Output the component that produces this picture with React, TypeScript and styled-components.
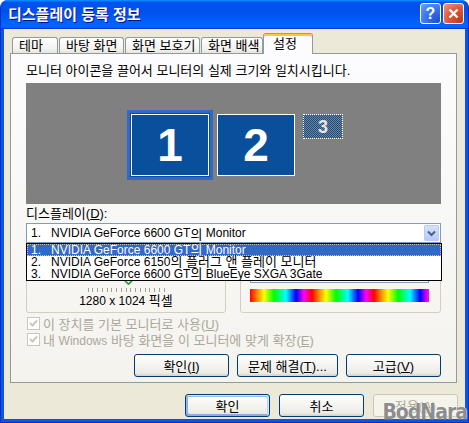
import styled, { createGlobalStyle, css } from "styled-components";

const GlobalStyle = createGlobalStyle`
  html, body {
    margin: 0;
    padding: 0;
    background: #ffffff;
  }
  body {
    font-family: "Liberation Sans", "Noto Sans CJK KR", sans-serif;
    font-size: 13px;
    color: #000;
  }
  * {
    box-sizing: border-box;
  }
`;

const Window = styled.div`
  position: relative;
  width: 469px;
  height: 423px;
  display: flex;
  flex-direction: column;
  background: #0b55e3;
  border: 1px solid #0031c4;
  border-top: 0;
  border-radius: 8px 8px 0 0;
  overflow: hidden;
`;

const TitleBar = styled.div`
  height: 29px;
  margin: 0 -1px;
  display: flex;
  align-items: center;
  padding: 0 5px 2px 8px;
  background: linear-gradient(
    180deg,
    #0997ff,
    #0053ee 8%,
    #0050ee 40%,
    #0066ff 88%,
    #0066ff 93%,
    #005bff 95%,
    #003dd7 96%,
    #003dd7
  );
`;

const Title = styled.div`
  flex: 1;
  color: #fff;
  font-size: 15px;
  font-weight: bold;
  text-shadow: 1px 1px #0f1089;
`;

const TitleButton = styled.div<{ $kind: "help" | "close" }>`
  width: 21px;
  height: 21px;
  margin-left: 2px;
  border: 1px solid #fff;
  border-radius: 3px;
  display: grid;
  place-items: center;
  color: #fff;
  font-family: "Liberation Sans", sans-serif;
  font-weight: bold;
  font-size: 16px;
  ${(p) =>
    p.$kind === "help"
      ? css`
          background: radial-gradient(circle at 90% 90%, #1f4fd0 0%, #3b77ee 55%, #6f9ff7 100%);
        `
      : css`
          background: radial-gradient(circle at 90% 90%, #c4391b 0%, #e0583b 55%, #ef9a83 100%);
        `}
`;

const Body = styled.div`
  flex: 1;
  margin: 0 3px 3px;
  background: #ece9d8;
  display: flex;
  flex-direction: column;
  padding: 4px 7px 2px 6px;
`;

const TabRow = styled.div`
  position: relative;
  z-index: 1;
  height: 20px;
  display: flex;
  align-items: flex-end;
  padding-left: 2px;
`;

const Tab = styled.div<{ $w: number; $active?: boolean }>`
  width: ${(p) => p.$w}px;
  height: 16px;
  margin-right: 1px;
  padding-left: 6px;
  line-height: 15px;
  white-space: nowrap;
  border: 1px solid #919b9c;
  border-bottom: 0;
  border-radius: 3px 3px 0 0;
  background: linear-gradient(180deg, #ffffff, #f3f3ef 70%, #e6e5dd);
  ${(p) =>
    p.$active &&
    css`
      height: 21px;
      margin: 0 0 -1px -1px;
      padding-left: 9px;
      line-height: 15px;
      border-top: 1px solid #e68b2c;
      box-shadow: inset 0 2px #ffc73c;
      padding-top: 2px;
      background: #fcfcfe;
    `}
`;

const Panel = styled.div`
  width: 447px;
  height: 330px;
  border: 1px solid #919b9c;
  background: linear-gradient(180deg, #fcfcfe, #f4f3ee);
  display: flex;
  flex-direction: column;
  padding: 10px 15px 5px 15px;
`;

const Line = styled.div`
  height: 14px;
  line-height: 14px;
  white-space: pre;
`;

const Ko = styled.span`
  font-size: 13px;
`;

const Lat = styled.span`
  font-size: 12px;
`;

const Preview = styled.div`
  height: 121px;
  margin-top: 5px;
  background: #808080;
  display: flex;
  align-items: flex-start;
  gap: 8px;
  padding: 31px 0 0 105px;
`;

const Monitor = styled.div<{ $selected?: boolean }>`
  width: 78px;
  height: 62px;
  border: 1px solid #fff;
  background: #0a4f9b;
  display: grid;
  place-items: center;
  color: #fff;
  font-family: "Liberation Sans", sans-serif;
  font-weight: bold;
  font-size: 46px;
  line-height: 1;
  ${(p) =>
    p.$selected &&
    css`
      box-shadow: 0 0 0 1px #0a4f9b, 0 0 0 4px #3169c6;
    `}
`;

const GhostMonitor = styled.div`
  width: 40px;
  height: 25px;
  border: 1px dotted #fff;
  background: repeating-conic-gradient(#0a4f9b 0 25%, #808080 0 50%) 0 0 / 2px 2px;
  display: grid;
  place-items: center;
  color: #e6e6e6;
  font-family: "Liberation Sans", sans-serif;
  font-weight: bold;
  font-size: 18px;
  line-height: 1;
`;

const Label = styled(Line)`
  margin-top: 3px;
`;

const SelectWrap = styled.div`
  position: relative;
  z-index: 2;
  margin-top: 2px;
`;

const Select = styled.div<{ $w: number }>`
  width: ${(p) => p.$w}px;
  height: 20px;
  border: 1px solid #7f9db9;
  background: #fff;
  display: flex;
  align-items: center;
  padding-left: 4px;
  font-size: 12px;
  white-space: pre;
`;

const ArrowButton = styled.div`
  margin-left: auto;
  margin-right: 1px;
  width: 15px;
  height: 16px;
  border: 1px solid #b9ccf9;
  border-radius: 1px;
  background: linear-gradient(180deg, #d5e1fc, #b6cbf8);
  display: grid;
  place-items: center;
`;

const DropList = styled.div`
  position: absolute;
  top: 100%;
  left: 0;
  width: 416px;
  height: 38px;
  border: 1px solid #000;
  background: #fff;
`;

const DropItem = styled.div<{ $active?: boolean }>`
  height: 12px;
  line-height: 12px;
  padding-left: 4px;
  font-size: 12px;
  white-space: pre;
  ${(p) =>
    p.$active &&
    css`
      background: #316ac5;
      color: #fff;
      outline: 1px dotted #f2c45e;
      outline-offset: -1px;
    `}
`;

const GroupRow = styled.div`
  margin-top: 4px;
  display: flex;
  gap: 14px;
`;

const Group = styled.div<{ $w: number }>`
  width: ${(p) => p.$w}px;
  height: 66px;
  border: 1px solid #d0d0bf;
  border-radius: 3px;
  display: flex;
  flex-direction: column;
`;

const ResolutionBox = styled(Group)`
  align-items: center;
  padding-top: 14px;
`;

const Track = styled.div`
  position: relative;
  width: 77px;
  height: 24px;
  &::before {
    content: "";
    position: absolute;
    left: 0;
    right: 0;
    top: 10px;
    height: 4px;
    border: 1px solid #9d9c99;
    border-right-color: #fff;
    border-bottom-color: #fff;
    background: #e6e5dd;
  }
`;

const Thumb = styled.svg`
  position: absolute;
  left: 35px;
  top: 3px;
`;

const Ticks = styled.div`
  width: 77px;
  height: 4px;
  margin-top: 2px;
  display: flex;
  justify-content: space-between;
  span {
    width: 1px;
    background: #a1a192;
  }
`;

const ResText = styled(Line)`
  margin-top: 2px;
`;

const ColorBox = styled(Group)`
  padding: 15px 11px 0 9px;
`;

const ColorBar = styled.div`
  width: 179px;
  height: 13px;
  margin-top: 6px;
  background: repeating-linear-gradient(
    90deg,
    #ff0000 0px,
    #ff9900 8px,
    #ffff00 14px,
    #00ff00 24px,
    #00ffff 36px,
    #0000ff 46px,
    #ff00ff 54px,
    #ff0000 62px
  );
`;

const CheckRow = styled.div<{ $gap: number }>`
  margin-top: ${(p) => p.$gap}px;
  height: 14px;
  display: flex;
  align-items: center;
  gap: 3px;
  padding-left: 1px;
  color: #aca899;
  white-space: pre;
`;

const CheckBox = styled.div`
  width: 13px;
  height: 13px;
  border: 1px solid #cac8bb;
  background: #fff;
  display: grid;
  place-items: center;
`;

const ButtonRow = styled.div<{ $top: number; $gap: number }>`
  margin-top: ${(p) => p.$top}px;
  display: flex;
  justify-content: flex-end;
  gap: ${(p) => p.$gap}px;
`;

const Button = styled.button<{ $w: number; $default?: boolean }>`
  width: ${(p) => p.$w}px;
  height: 23px;
  padding: 0;
  font: inherit;
  color: #000;
  border: 1px solid #003c74;
  border-radius: 3px;
  background: linear-gradient(180deg, #ffffff, #ecebe6 86%, #d6d0c5);
  white-space: pre;
  ${(p) =>
    p.$default &&
    css`
      box-shadow: inset -1px 1px #cee7ff, inset 1px 2px #98b8ea, inset -2px 2px #bcd4f6,
        inset 1px -1px #89ade4, inset 2px -2px #89ade4;
    `}
  &:disabled {
    color: #aca899;
    border-color: #c9c7ba;
    background: #f5f4ea;
  }
`;

const Watermark = styled.div`
  position: absolute;
  right: 1px;
  bottom: 0;
  line-height: 19px;
  font-family: "DejaVu Sans", sans-serif;
  font-stretch: condensed;
  font-weight: bold;
  font-size: 21px;
  letter-spacing: -1px;
  color: rgba(120, 120, 120, 0.85);
  text-shadow: 0 0 1px #fff, 0 0 1px #fff;
  pointer-events: none;
`;

const Chevron = () => (
  <svg width="9" height="7" viewBox="0 0 9 7">
    <path d="M1 1.5 L4.5 5 L8 1.5" fill="none" stroke="#4d6185" strokeWidth="2" />
  </svg>
);

const Check = () => (
  <svg width="9" height="9" viewBox="0 0 9 9">
    <path d="M1 4 L3.5 6.5 L8 1.5" fill="none" stroke="#cac8bb" strokeWidth="2" />
  </svg>
);

const tabs = [
  { label: "테마", w: 46 },
  { label: "바탕 화면", w: 65 },
  { label: "화면 보호기", w: 75 },
  { label: "화면 배색", w: 62 },
];

export default function App() {
  return (
    <>
      <GlobalStyle />
      <Window>
        <TitleBar>
          <Title>디스플레이 등록 정보</Title>
          <TitleButton $kind="help">?</TitleButton>
          <TitleButton $kind="close">
            <svg width="11" height="11" viewBox="0 0 11 11">
              <path d="M1.5 1.5 L9.5 9.5 M9.5 1.5 L1.5 9.5" stroke="#fff" strokeWidth="2.4" />
            </svg>
          </TitleButton>
        </TitleBar>
        <Body>
          <TabRow>
            {tabs.map((t) => (
              <Tab key={t.label} $w={t.w}>
                {t.label}
              </Tab>
            ))}
            <Tab $w={50} $active>
              설정
            </Tab>
          </TabRow>
          <Panel>
            <Line>모니터 아이콘을 끌어서 모니터의 실제 크기와 일치시킵니다.</Line>
            <Preview>
              <Monitor $selected>1</Monitor>
              <Monitor>2</Monitor>
              <GhostMonitor>3</GhostMonitor>
            </Preview>
            <Label>
              디스플레이(<u>D</u>):
            </Label>
            <SelectWrap>
              <Select $w={415}>
                {"1.   NVIDIA GeForce 6600 GT"}
                <Ko>의</Ko> Monitor
                <ArrowButton>
                  <Chevron />
                </ArrowButton>
              </Select>
              <DropList>
                <DropItem $active>
                  {"1.   NVIDIA GeForce 6600 GT"}
                  <Ko>의</Ko> Monitor
                </DropItem>
                <DropItem>
                  {"2.   NVIDIA GeForce 6150"}
                  <Ko>의 플러그 앤 플레이 모니터</Ko>
                </DropItem>
                <DropItem>
                  {"3.   NVIDIA GeForce 6600 GT"}
                  <Ko>의</Ko> BlueEye SXGA 3Gate
                </DropItem>
              </DropList>
            </SelectWrap>
            <GroupRow>
              <ResolutionBox $w={200}>
                <Track>
                  <Thumb width="11" height="21" viewBox="0 0 11 21">
                    <path d="M0.5 0.5 H10.5 V15 L5.5 20 L0.5 15 Z" fill="#f7f7f4" stroke="#9d9c99" />
                    <path d="M1.5 15 L5.5 19 L9.5 15" fill="none" stroke="#21a121" strokeWidth="1.5" />
                  </Thumb>
                </Track>
                <Ticks>
                  {Array.from({ length: 17 }).map((_, i) => (
                    <span key={i} />
                  ))}
                </Ticks>
                <ResText>
                  <Lat>1280 x 1024</Lat> 픽셀
                </ResText>
              </ResolutionBox>
              <ColorBox $w={201}>
                <Select $w={179}>
                  <ArrowButton>
                    <Chevron />
                  </ArrowButton>
                </Select>
                <ColorBar />
              </ColorBox>
            </GroupRow>
            <CheckRow $gap={3}>
              <CheckBox>
                <Check />
              </CheckBox>
              <span>
                이 장치를 기본 모니터로 사용(<u>U</u>)
              </span>
            </CheckRow>
            <CheckRow $gap={2}>
              <CheckBox>
                <Check />
              </CheckBox>
              <span>
                내 <Lat>Windows</Lat> 바탕 화면을 이 모니터에 맞게 확장(<u>E</u>)
              </span>
            </CheckRow>
            <ButtonRow $top={8} $gap={8}>
              <Button $w={95}>
                확인(<u>I</u>)
              </Button>
              <Button $w={101}>
                문제 해결(<u>T</u>)...
              </Button>
              <Button $w={95}>
                고급(<u>V</u>)
              </Button>
            </ButtonRow>
          </Panel>
          <ButtonRow $top={11} $gap={9}>
            <Button $w={85} $default>
              확인
            </Button>
            <Button $w={85}>취소</Button>
            <Button $w={85} disabled>
              적용(<u>A</u>)
            </Button>
          </ButtonRow>
        </Body>
        <Watermark>BodNara</Watermark>
      </Window>
    </>
  );
}
